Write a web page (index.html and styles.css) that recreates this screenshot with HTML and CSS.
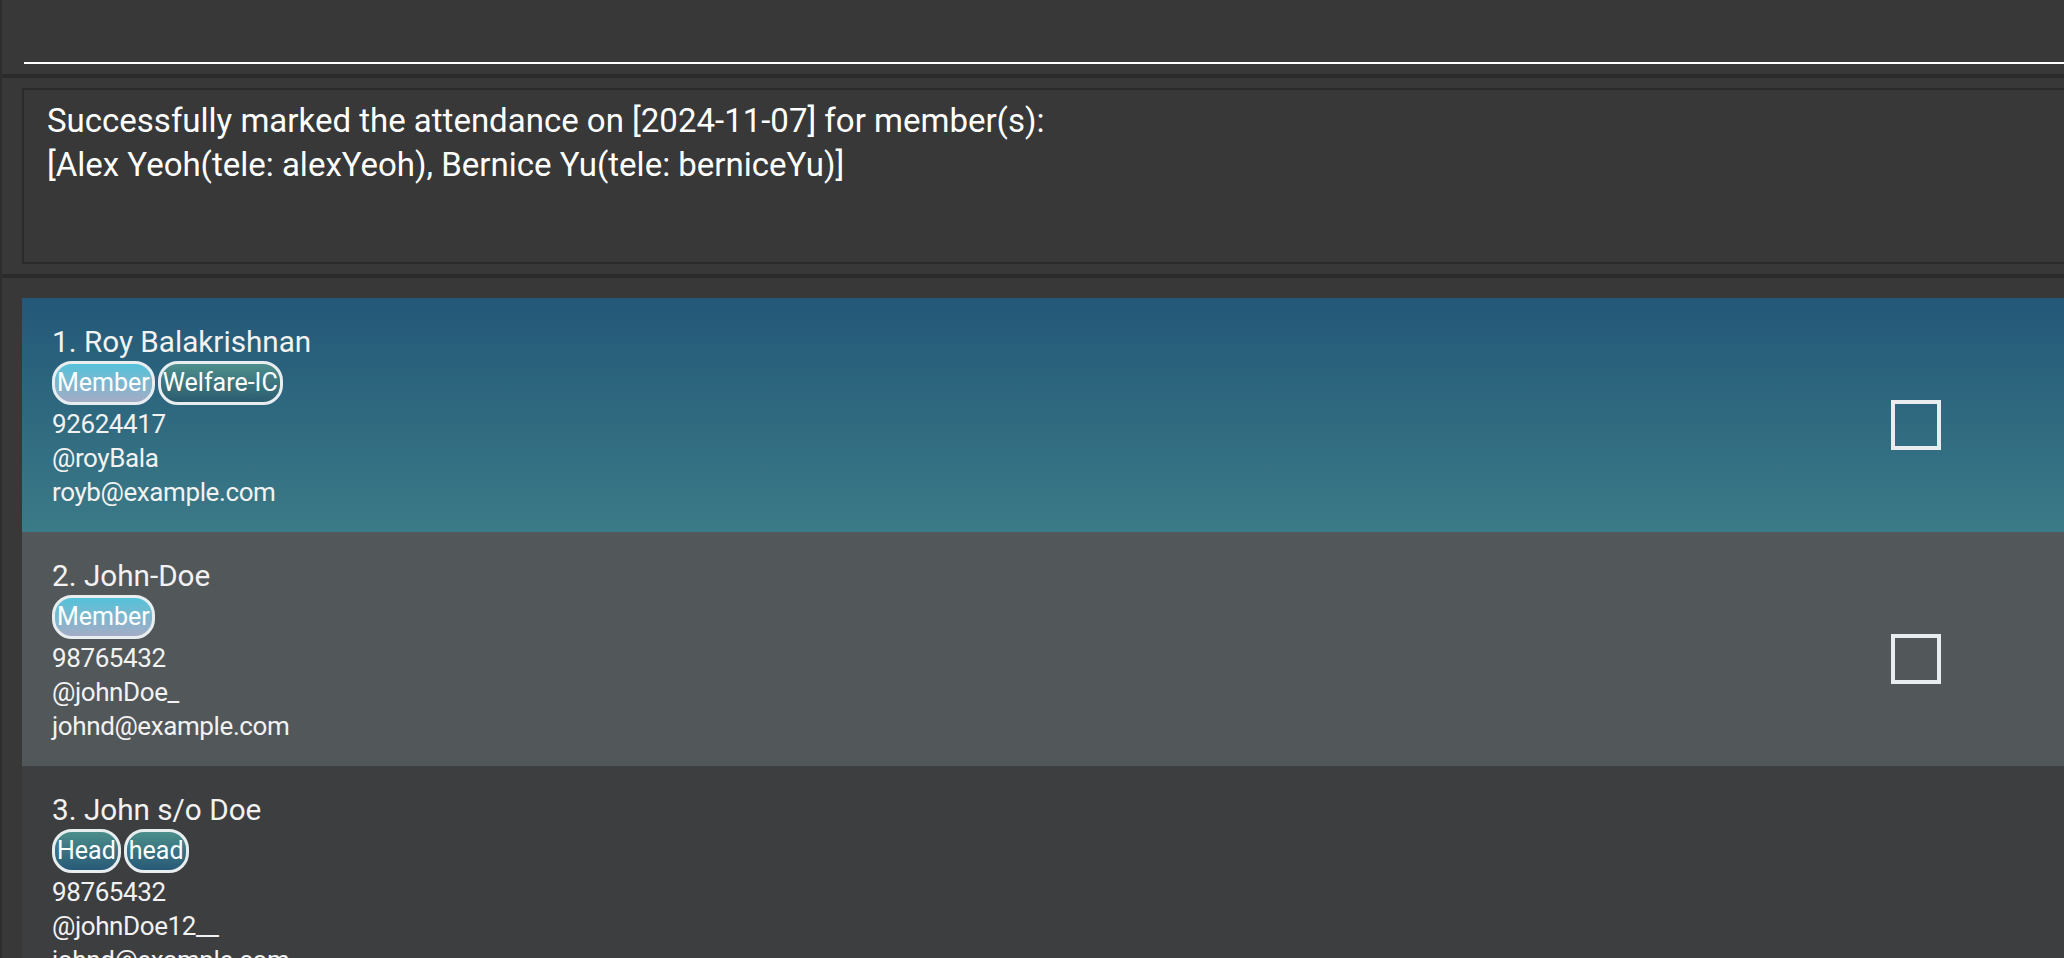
FILE: index.html
```html
<!DOCTYPE html>
<html lang="en">
<head>
<meta charset="utf-8">
<title>Members</title>
<link rel="stylesheet" href="styles.css">
</head>
<body>
<div class="app">
  <div class="command"><div class="command-input"></div></div>
  <div class="divider"></div>
  <div class="result-wrap">
    <div class="result-box">
      <p class="result-text">Successfully marked the attendance on [2024-11-07] for member(s):<br>[Alex Yeoh(tele: alexYeoh), Bernice Yu(tele: berniceYu)]</p>
    </div>
  </div>
  <div class="divider"></div>
  <div class="list">
    <div class="card card-selected">
      <div class="details">
        <div class="name">1. Roy Balakrishnan</div>
        <div class="tags"><span class="tag tag-member">Member</span><span class="tag tag-teal">Welfare-IC</span></div>
        <div class="line">92624417</div>
        <div class="line">@royBala</div>
        <div class="line">royb@example.com</div>
      </div>
      <div class="check"></div>
    </div>
    <div class="card card-even">
      <div class="details">
        <div class="name">2. John-Doe</div>
        <div class="tags"><span class="tag tag-member">Member</span></div>
        <div class="line">98765432</div>
        <div class="line">@johnDoe_</div>
        <div class="line">johnd@example.com</div>
      </div>
      <div class="check"></div>
    </div>
    <div class="card card-odd">
      <div class="details">
        <div class="name">3. John s/o Doe</div>
        <div class="tags"><span class="tag tag-head">Head</span><span class="tag tag-head">head</span></div>
        <div class="line">98765432</div>
        <div class="line">@johnDoe12__</div>
        <div class="line">johnd@example.com</div>
      </div>
    </div>
  </div>
</div>
</body>
</html>
```
FILE: styles.css
```css
html, body {
  margin: 0;
  height: 100%;
  overflow: hidden;
  background: #383838;
}

body {
  font-family: Roboto, "Liberation Sans", sans-serif;
  color: #f2f2f2;
}

.app {
  min-height: 100%;
  border-left: 2px solid #2d2d2d;
}

.command {
  height: 74px;
  padding-left: 22px;
  box-sizing: border-box;
}

.command-input {
  height: 64px;
  box-sizing: border-box;
  border-bottom: 2px solid #ffffff;
}

.divider {
  height: 4px;
  background: #2b2b2b;
}

.result-wrap {
  padding: 10px 0 10px 20px;
}

.result-box {
  height: 176px;
  box-sizing: border-box;
  border: 2px solid #2b2b2b;
  border-right: none;
  padding: 9px 0 0 23px;
}

.result-text {
  margin: 0;
  font-size: 33px;
  line-height: 44px;
  color: #ffffff;
}

.list {
  padding: 20px 0 0 20px;
}

.card {
  display: flex;
  align-items: center;
  height: 234px;
  box-sizing: border-box;
}

.card-selected {
  background: linear-gradient(#235878, #3b7a87);
}

.card-even {
  background: #52575a;
}

.card-odd {
  background: #3d3e40;
}

.details {
  flex: 1;
  align-self: flex-start;
  padding: 26px 0 0 30px;
}

.name {
  font-size: 29.7px;
  line-height: 36px;
}

.tags {
  display: flex;
  gap: 3px;
  margin: 1px 0 2px;
}

.tag {
  height: 44px;
  box-sizing: border-box;
  border: 3px solid #e8eef0;
  border-radius: 20px;
  padding: 0 2px;
  font-size: 25px;
  line-height: 38px;
  color: #ffffff;
}

.tag-member {
  background: linear-gradient(#54c2d9, #a4acc6);
}

.tag-teal {
  background: linear-gradient(#4d8f8c, #2b5c70);
}

.tag-head {
  background: linear-gradient(#4b8e8a, #285a78);
}

.line {
  font-size: 26px;
  line-height: 34px;
  letter-spacing: -0.4px;
}

.check {
  width: 50px;
  height: 50px;
  box-sizing: border-box;
  border: 4px solid #e9edef;
  margin: 20px 123px 0 0;
}
```
